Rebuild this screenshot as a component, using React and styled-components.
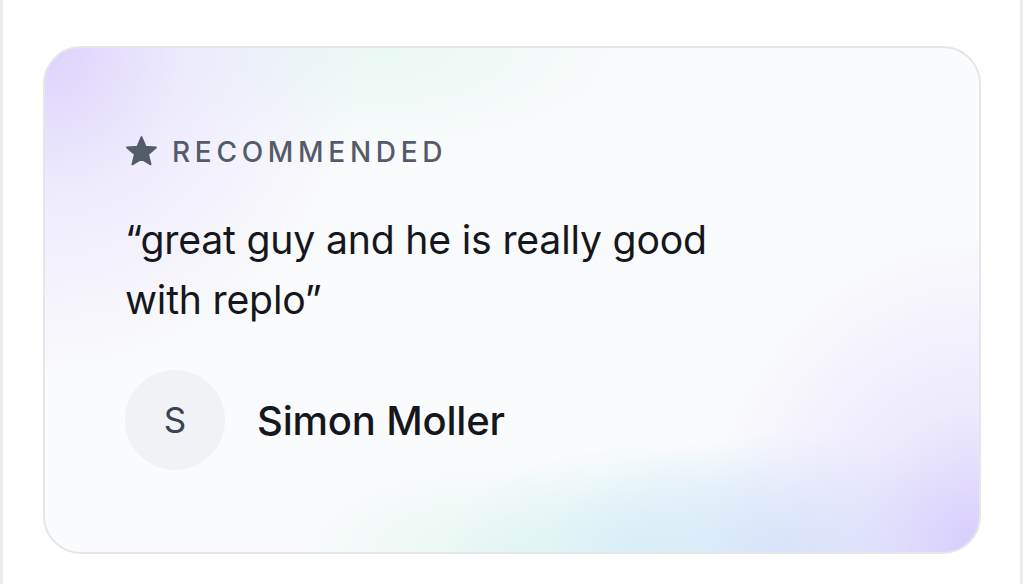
import React from "react";
import styled, { createGlobalStyle } from "styled-components";

const Global = createGlobalStyle`
  html, body { margin: 0; padding: 0; background: #ffffff; }
  body { font-family: Inter, "Noto Sans", sans-serif; -webkit-font-smoothing: antialiased; }
`;

const Frame = styled.div`
  box-sizing: border-box;
  width: 1023px;
  height: 584px;
  border-left: 3px solid #ececee;
  border-right: 3px solid #ececee;
  padding: 46px 39px 0 40px;
  background: #ffffff;
`;

const Card = styled.section`
  box-sizing: border-box;
  width: 938px;
  height: 508px;
  border: 2px solid #e6e6ea;
  border-radius: 38px;
  padding: 89px 80px 0 80px;
  background-color: #fafbfc;
  background-image:
    radial-gradient(ellipse 320px 330px at 0% 0%, rgba(218, 208, 253, 0.95), rgba(218, 208, 253, 0.35) 45%, rgba(218, 208, 253, 0) 100%),
    radial-gradient(ellipse 260px 110px at 36% 0%, rgba(230, 248, 242, 0.8), rgba(230, 248, 242, 0) 100%),
    radial-gradient(ellipse 280px 320px at 100% 100%, rgba(214, 204, 253, 1), rgba(214, 204, 253, 0.35) 45%, rgba(214, 204, 253, 0) 100%),
    radial-gradient(ellipse 230px 120px at 78% 100%, rgba(214, 232, 250, 0.95), rgba(214, 232, 250, 0) 100%),
    radial-gradient(ellipse 200px 110px at 64% 100%, rgba(214, 242, 244, 0.95), rgba(214, 242, 244, 0) 100%),
    radial-gradient(ellipse 200px 90px at 48% 100%, rgba(226, 247, 240, 0.8), rgba(226, 247, 240, 0) 100%);
  display: flex;
  flex-direction: column;
`;

const Tag = styled.div`
  display: flex;
  align-items: center;
  gap: 14px;
  color: #545b6a;
  font-size: 28px;
  font-weight: 500;
  letter-spacing: 4.7px;
  line-height: 28px;
`;

const StarIcon = styled.svg`
  width: 33px;
  height: 33px;
  margin: -2px 0;
  flex: none;
  fill: #545b6a;
`;

const Quote = styled.p`
  margin: 44px 0 0;
  color: #16171c;
  font-size: 39.2px;
  font-weight: 400;
  line-height: 60px;
  letter-spacing: -0.2px;
  max-width: 640px;
`;

const Author = styled.div`
  display: flex;
  align-items: center;
  gap: 32px;
  margin-top: 40px;
`;

const Avatar = styled.div`
  width: 100px;
  height: 100px;
  border-radius: 50%;
  background: #f1f2f5;
  display: flex;
  align-items: center;
  justify-content: center;
  color: #3d4250;
  font-size: 35px;
  font-weight: 400;
`;

const Name = styled.div`
  color: #16171c;
  font-size: 40px;
  font-weight: 500;
  letter-spacing: -0.2px;
`;

export default function App() {
  return (
    <>
      <Global />
      <Frame>
        <Card>
          <Tag>
            <StarIcon viewBox="1.5 1.5 21 21">
              <path d="M12 2.8l2.6 6.1 6.6.5-5 4.3 1.6 6.5L12 16.7l-5.8 3.5 1.6-6.5-5-4.3 6.6-.5z" strokeLinejoin="round" stroke="#545b6a" strokeWidth="1.2" />
            </StarIcon>
            RECOMMENDED
          </Tag>
          <Quote>“great guy and he is really good with replo”</Quote>
          <Author>
            <Avatar>S</Avatar>
            <Name>Simon Moller</Name>
          </Author>
        </Card>
      </Frame>
    </>
  );
}
